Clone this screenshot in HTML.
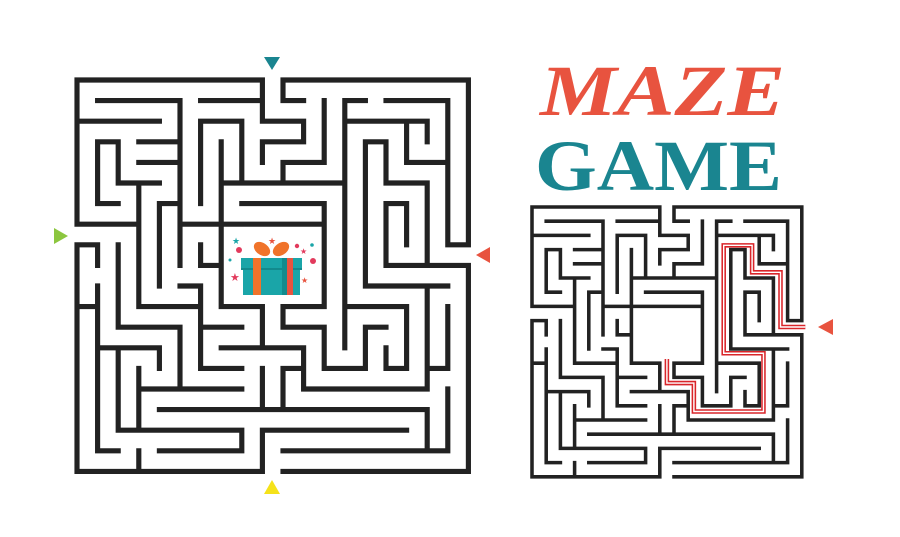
<!DOCTYPE html>
<html><head><style>html,body{margin:0;padding:0;background:#fff}svg{display:block}</style></head><body>
<svg width="900" height="537" viewBox="0 0 900 537" xmlns="http://www.w3.org/2000/svg">
<defs>
<path id="mz" fill="none" stroke="#222" stroke-width="0.25" stroke-linecap="square" d="
M9 0H0V7 M0 8V19H9 M10 19H19V9 M19 8V0H10V1H11
M9 0V2H11V3H9V4
M1 1H5V9 M6 1H9 M0 2H4
M1 3H2 M1 3V6H2 M2 3V5H4 M3 3H5 M3 4H5
M3 5V11H6 M0 7H3 M4 6V10 M4 6H5
M6 2V6 M6 2H8V5
M7 3V11H9V13 M7 5H13 M8 6H12V11 M10 11H12 M10 11V12H12V14H14V12H15
M5 7H12 M6 8V9H7
M10 4V5 M10 4H12V1
M13 1V13 M13 1H14
M15 1H18V8H19 M13 2H17V3 M16 2V4H18
M14 3H15 M14 3V10 M15 3V5H17V9 M15 9H19 M15 6V9 M15 6H16V8
M14 10H18 M17 10V15 M17 14H18 M18 11V14
M13 11H16V14H15V13
M7 13H11V15H17 M6 10V14H8 M5 10H6 M6 12H8
M10 14V16 M10 14H11 M9 14V16
M4 16H17V18H18V15
M2 17H8V18H4 M9 17H16 M9 17V19 M10 18H18
M1 8V9 M0 8H1 M1 10V18H2 M0 11H1
M2 8V12H5V15H3 M3 15H8 M3 14V17
M1 13H4V14 M2 13V17 M3 18V19"/>
</defs>
<use href="#mz" transform="translate(77,80) scale(20.6)"/>
<use href="#mz" transform="translate(532,207) scale(14.2)"/>
<!-- red path in right maze -->
<g transform="translate(532,207) scale(14.2)">
<path d="M19.25 8.45H17.5V4.6H15.5V2.7H13.5V10.3H16.3V14.4H11.4V12.4H9.5V10.7" fill="none" stroke="#d9252a" stroke-width="0.32"/>
<path d="M19.25 8.45H17.5V4.6H15.5V2.7H13.5V10.3H16.3V14.4H11.4V12.4H9.5V10.7" fill="none" stroke="#fff" stroke-width="0.1"/>
</g>
<!-- arrows -->
<polygon points="264,57 280,57 272,70" fill="#1a8590"/>
<polygon points="54,228 54,244 68,236" fill="#8cc63f"/>
<polygon points="490,247 490,263 476,255" fill="#e8533f"/>
<polygon points="264,494 280,494 272,480" fill="#f5e21a"/>
<polygon points="833,319 833,335 818,327" fill="#e8533f"/>
<!-- gift -->
<ellipse cx="262" cy="249" rx="9" ry="6" fill="#f0732a" transform="rotate(35 262 249)"/>
<ellipse cx="281" cy="249" rx="9" ry="6" fill="#f0732a" transform="rotate(-35 281 249)"/>
<rect x="243" y="269" width="57" height="26" fill="#1aa5a8"/>
<rect x="241" y="258" width="61" height="11" fill="#1aa5a8"/>
<rect x="241" y="268" width="61" height="2" fill="#128a8d"/>
<rect x="253" y="258" width="8" height="37" fill="#f0732a"/>
<rect x="282" y="258" width="5" height="37" fill="#128a8d"/>
<rect x="287" y="258" width="6" height="37" fill="#e8533f"/>
<g fill="#e23a5c">
<circle cx="239" cy="250" r="3"/><circle cx="297" cy="246" r="2.2"/><circle cx="313" cy="261" r="3"/>
<text x="230" y="281" font-size="11" font-family="DejaVu Sans">★</text>
<text x="300" y="254" font-size="8" font-family="DejaVu Sans">★</text>
<text x="301" y="283" font-size="8" font-family="DejaVu Sans" fill="#e8533f">★</text>
<text x="268" y="244" font-size="9" font-family="DejaVu Sans" fill="#e8533f">★</text>
</g>
<g fill="#1aa5a8"><text x="232" y="244" font-size="9" font-family="DejaVu Sans">★</text><circle cx="312" cy="245" r="1.8"/><circle cx="230" cy="260" r="1.5"/></g>
<!-- title -->
<text x="540" y="115" textLength="245" lengthAdjust="spacingAndGlyphs" font-family="Liberation Serif" font-weight="bold" font-style="italic" font-size="72" fill="#e8533f">MAZE</text>
<text x="535" y="190" textLength="247" lengthAdjust="spacingAndGlyphs" font-family="Liberation Serif" font-weight="bold" font-size="72" fill="#1a8590">GAME</text>
</svg>
</body></html>
